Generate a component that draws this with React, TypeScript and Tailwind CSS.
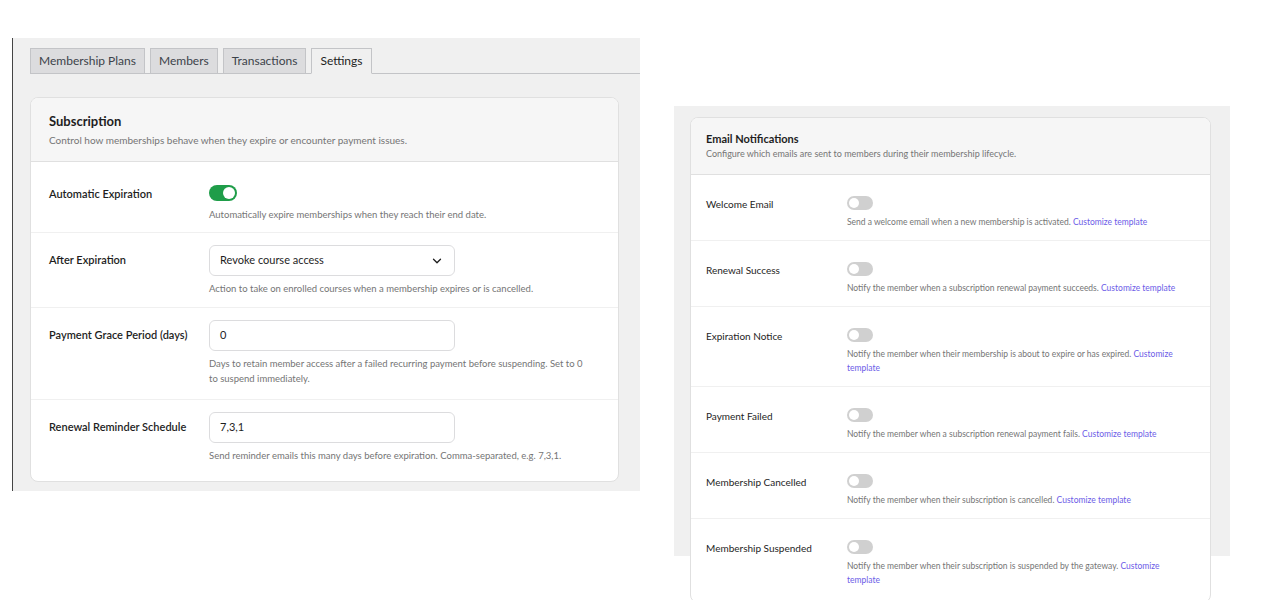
import { ChevronDown } from "lucide-react";

const font = { fontFamily: 'Lato, "Open Sans", sans-serif' };

function Toggle({ on }: { on?: boolean }) {
  return on ? (
    <div className="flex h-[16px] w-[28px] items-center justify-end rounded-full bg-[#1f9d49] px-[2px]">
      <div className="h-[12px] w-[12px] rounded-full bg-white" />
    </div>
  ) : (
    <div className="flex h-[14px] w-[26px] items-center rounded-full bg-[#d0d0d0] px-[2px]">
      <div className="h-[10px] w-[10px] rounded-full bg-white" />
    </div>
  );
}

const subRows = [
  { label: "Automatic Expiration", kind: "toggle", help: "Automatically expire memberships when they reach their end date.", h: "h-[71px]" },
  { label: "After Expiration", kind: "select", value: "Revoke course access", help: "Action to take on enrolled courses when a membership expires or is cancelled.", h: "h-[75px]" },
  { label: "Payment Grace Period (days)", kind: "input", value: "0", help: "Days to retain member access after a failed recurring payment before suspending. Set to 0 to suspend immediately.", h: "h-[92px]" },
  { label: "Renewal Reminder Schedule", kind: "input", value: "7,3,1", help: "Send reminder emails this many days before expiration. Comma-separated, e.g. 7,3,1.", h: "h-[71px]" },
];

const emailRows = [
  { label: "Welcome Email", help: "Send a welcome email when a new membership is activated." },
  { label: "Renewal Success", help: "Notify the member when a subscription renewal payment succeeds." },
  { label: "Expiration Notice", help: "Notify the member when their membership is about to expire or has expired." },
  { label: "Payment Failed", help: "Notify the member when a subscription renewal payment fails." },
  { label: "Membership Cancelled", help: "Notify the member when their subscription is cancelled." },
  { label: "Membership Suspended", help: "Notify the member when their subscription is suspended by the gateway." },
];

export default function App() {
  return (
    <div className="flex h-[600px] items-start bg-white text-[#1e1e1e]" style={font}>
      <div className="ml-[12px] mt-[38px] h-[453px] w-[628px] border-l border-[#444] bg-[#f0f0f0] pl-[17px] pt-[10px]">
        <div className="flex items-end gap-[5px] border-b border-[#c3c4c7]">
          {["Membership Plans", "Members", "Transactions", "Settings"].map((t, i) => (
            <div
              key={t}
              className={
                "-mb-px flex h-[26px] items-center border border-[#c3c4c7] px-[8px] text-[12px] " +
                (i === 3 ? "border-b-[#f0f0f0] bg-[#f0f0f0] text-[#1e1e1e]" : "bg-[#dcdcde] text-[#3c434a]")
              }
            >
              {t}
            </div>
          ))}
        </div>
        <div className="mt-[23px] w-[589px] overflow-hidden rounded-[8px] border border-[#e0e0e0] bg-white">
          <div className="h-[64px] border-b border-[#e0e0e0] bg-[#f6f6f6] px-[18px] pt-[14px]">
            <div className="text-[13px] font-bold leading-[18px]">Subscription</div>
            <div className="mt-[3px] text-[10px] text-[#757575]">Control how memberships behave when they expire or encounter payment issues.</div>
          </div>
          <div className="pb-[10px]">
            {subRows.map((r, i) => (
              <div key={r.label} className={"flex px-[18px] " + r.h + (i < 3 ? " border-b border-[#f0f0f0]" : "")}>
                <div className={"w-[160px] text-[11px] font-semibold " + (r.kind === "toggle" ? "pt-[24px]" : "pt-[19px]")}>{r.label}</div>
                <div className={"flex-1 " + (r.kind === "toggle" ? "pt-[23px]" : "pt-[12px]")}>
                  {r.kind === "toggle" && <Toggle on />}
                  {r.kind === "select" && (
                    <div className="flex h-[31px] w-[246px] items-center justify-between rounded-[6px] border border-[#dcdcde] px-[10px] text-[11px]">
                      {r.value}
                      <ChevronDown size={14} strokeWidth={2.2} />
                    </div>
                  )}
                  {r.kind === "input" && (
                    <div className="flex h-[31px] w-[246px] items-center rounded-[6px] border border-[#dcdcde] px-[10px] text-[11px]">{r.value}</div>
                  )}
                  <div className={"w-[380px] text-[9.5px] leading-[15px] text-[#757575] " + (r.kind === "toggle" ? "mt-[6px]" : "mt-[5px]")}>{r.help}</div>
                </div>
              </div>
            ))}
          </div>
        </div>
      </div>

      <div className="ml-[34px] mt-[106px] h-[450px] w-[556px] bg-[#f0f0f0] pl-[16px] pt-[11px]">
        <div className="w-[521px] overflow-hidden rounded-[8px] border border-[#e0e0e0] bg-white">
          <div className="h-[57px] border-b border-[#e0e0e0] bg-[#f6f6f6] px-[15px] pt-[13px]">
            <div className="text-[11px] font-bold leading-[15px]">Email Notifications</div>
            <div className="mt-[1px] text-[9px] text-[#757575]">Configure which emails are sent to members during their membership lifecycle.</div>
          </div>
          <div className="pb-[4px]">
            {emailRows.map((r, i) => (
              <div key={r.label} className={"flex px-[15px] pb-[11px] pt-[21px]" + (i < 5 ? " border-b border-[#f0f0f0]" : "")}>
                <div className="w-[141px] pt-[1px] text-[10px]">{r.label}</div>
                <div className="flex-1">
                  <Toggle />
                  <div className="mt-[5px] w-[330px] text-[8.5px] leading-[14px] text-[#757575]">
                    {r.help} <span className="text-[#6c5ce7]">Customize template</span>
                  </div>
                </div>
              </div>
            ))}
          </div>
        </div>
      </div>
    </div>
  );
}
